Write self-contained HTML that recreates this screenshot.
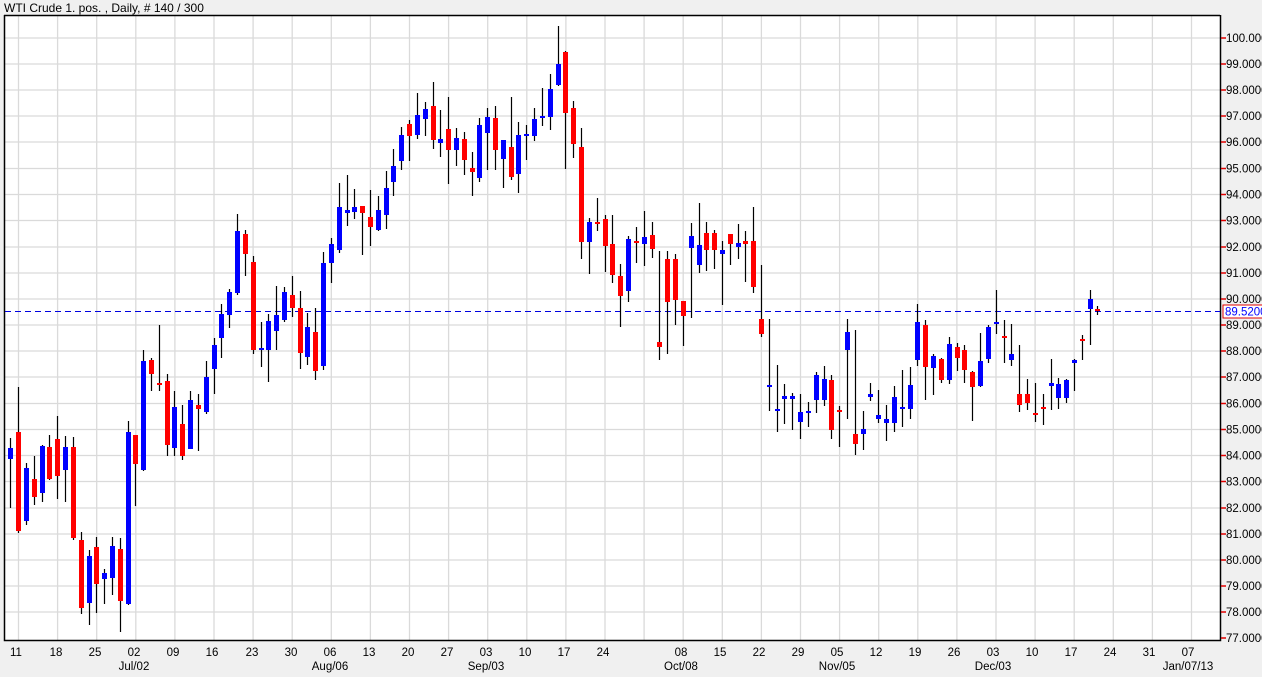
<!DOCTYPE html>
<html><head><meta charset="utf-8"><style>
html,body{margin:0;padding:0;background:#f0f0f0;}
svg{display:block;font-family:"Liberation Sans",sans-serif;}
</style></head><body>
<svg width="1262" height="677" viewBox="0 0 1262 677" xmlns="http://www.w3.org/2000/svg">
<rect x="0" y="0" width="1262" height="677" fill="#f0f0f0"/>
<rect x="5" y="15" width="1215" height="625" fill="#fff"/>
<text x="4" y="12" font-size="12" fill="#000">WTI Crude 1. pos. , Daily, # 140 / 300</text>
<g stroke="#dadada" stroke-width="1.3" fill="none">
<path d="M5 38H1220M5 64H1220M5 90H1220M5 116H1220M5 142H1220M5 168.5H1220M5 194.5H1220M5 220.5H1220M5 247H1220M5 273H1220M5 299H1220M5 325H1220M5 351H1220M5 377H1220M5 403.5H1220M5 429.5H1220M5 455.5H1220M5 481.5H1220M5 508H1220M5 534H1220M5 560H1220M5 586H1220M5 612H1220"/>
<path d="M18.5 15V640M57.6 15V640M96.7 15V640M135.8 15V640M174.9 15V640M214 15V640M253.1 15V640M292.2 15V640M331.3 15V640M370.4 15V640M409.5 15V640M448.6 15V640M487.7 15V640M526.8 15V640M565.9 15V640M605 15V640M644.1 15V640M683.2 15V640M722.3 15V640M761.4 15V640M800.5 15V640M839.6 15V640M878.7 15V640M917.8 15V640M956.9 15V640M996 15V640M1035.1 15V640M1074.2 15V640M1113.3 15V640M1152.4 15V640M1191.5 15V640"/>
</g>
<path d="M4.5 15V640.5H1220.5V15M4 15.5H1220" stroke="#000" stroke-width="1.5" fill="none"/>
<path d="M5 311.5H1220" stroke="#0000e0" stroke-width="1" stroke-dasharray="6,4"/>
<path stroke="#000" stroke-width="1.2" fill="none" d="M10.5 438V508M18.5 387V533M26.5 463V525M34.5 456V505M42.5 445V502M49.5 435V480M57.5 416V499M65.5 436V502M73.5 437V540M81.5 532V614M89.5 550V625M96.5 537V613M104.5 569V604M112.5 537V595M120.5 538V632M128.5 421V605M135.5 435V506M143.5 350V471M151.5 358V391M159.5 325V391M167.5 374V456M174.5 391V456M182.5 405V460M190.5 391V449M198.5 394V451M206.5 361V414M214.5 338V394M221.5 304V358M229.5 289V328M237.5 214V295M245.5 230V276M253.5 256V354M261.5 322V367M268.5 314V382M276.5 286V350M284.5 287V322M292.5 276V317M300.5 291V369M307.5 313V365M315.5 308V380M323.5 252V370M331.5 238V283M339.5 183V253M347.5 175V226M354.5 189V219M362.5 206V255M370.5 190V246M378.5 196V231M386.5 171V229M393.5 149V196M401.5 127V170M409.5 120V161M417.5 93V139M425.5 102V136M433.5 82V149M440.5 110V157M448.5 97V184M456.5 128V166M464.5 132V175M472.5 152V196M479.5 118V182M487.5 108V170M495.5 106V170M503.5 140V188M511.5 97V180M518.5 122V193M526.5 125V160M534.5 108V141M542.5 88V126M550.5 74V130M558.5 26V86M565.5 51V169M573.5 101V158M581.5 128V259M589.5 218V274M597.5 198V231M605.5 215V272M612.5 215V283M620.5 264V327M628.5 236V302M636.5 227V263M644.5 211V266M652.5 222V258M659.5 251V360M667.5 251V354M675.5 254V325M683.5 301V346M691.5 223V318M699.5 203V273M706.5 222V271M714.5 230V269M722.5 241V305M730.5 234V265M738.5 224V259M745.5 231V282M753.5 207V293M761.5 265V337M769.5 319V411M777.5 365V432M784.5 384V424M792.5 393V430M800.5 394V439M808.5 402V427M816.5 372V413M824.5 366V406M831.5 375V439M839.5 406V447M847.5 319V419M855.5 330V455M863.5 411V450M870.5 383V401M878.5 390V423M886.5 405V441M894.5 386V432M902.5 370V427M910.5 367V419M917.5 304V366M925.5 320V400M933.5 354V395M941.5 358V383M949.5 337V384M957.5 343V371M964.5 345V383M972.5 371V421M980.5 333V387M988.5 325V363M996.5 290V334M1004.5 320V363M1011.5 324V366M1019.5 345V412M1027.5 379V410M1035.5 383V422M1043.5 394V425M1051.5 359V410M1058.5 378V409M1066.5 379V403M1074.5 359V391M1082.5 335V360M1090.5 290V345M1097.5 306V315"/>
<path fill="#0000ff" d="M8 448h5v11h-5zM24 468h5v53h-5zM40 446h5v47h-5zM63 447h5v23h-5zM87 556h5v47h-5zM102 573h5v6h-5zM110 546h5v32h-5zM126 432h5v172h-5zM141 361h5v109h-5zM172 407h5v41h-5zM188 400h5v49h-5zM204 377h5v35h-5zM212 345h5v24h-5zM219 314h5v24h-5zM227 292h5v23h-5zM235 231h5v62h-5zM259 348h5v2h-5zM266 321h5v29h-5zM274 315h5v16h-5zM282 292h5v28h-5zM305 327h5v30h-5zM321 263h5v103h-5zM329 244h5v19h-5zM337 207h5v43h-5zM345 210h5v3h-5zM352 207h5v5h-5zM376 210h5v20h-5zM384 188h5v27h-5zM391 166h5v16h-5zM399 135h5v26h-5zM415 115h5v20h-5zM423 109h5v10h-5zM438 139h5v4h-5zM454 138h5v12h-5zM477 125h5v53h-5zM485 117h5v16h-5zM501 140h5v19h-5zM516 135h5v39h-5zM524 134h5v2h-5zM532 119h5v17h-5zM540 116h5v2h-5zM548 89h5v28h-5zM556 64h5v21h-5zM587 222h5v20h-5zM626 239h5v52h-5zM642 237h5v7h-5zM689 236h5v12h-5zM697 245h5v20h-5zM720 250h5v4h-5zM736 243h5v4h-5zM767 385h5v2h-5zM775 409h5v2h-5zM782 396h5v3h-5zM790 396h5v3h-5zM798 412h5v10h-5zM806 411h5v2h-5zM814 375h5v25h-5zM822 379h5v21h-5zM845 332h5v18h-5zM861 429h5v5h-5zM868 394h5v3h-5zM876 415h5v4h-5zM884 419h5v4h-5zM892 397h5v26h-5zM900 407h5v2h-5zM908 385h5v24h-5zM915 322h5v38h-5zM931 356h5v12h-5zM947 344h5v36h-5zM978 361h5v25h-5zM986 327h5v32h-5zM994 322h5v2h-5zM1009 354h5v6h-5zM1049 383h5v3h-5zM1056 384h5v14h-5zM1064 380h5v18h-5zM1072 360h5v3h-5zM1088 299h5v10h-5z"/>
<path fill="#ff0000" d="M16 432h5v99h-5zM32 479h5v18h-5zM47 447h5v32h-5zM55 439h5v37h-5zM71 447h5v91h-5zM79 540h5v68h-5zM94 547h5v37h-5zM118 549h5v52h-5zM133 435h5v29h-5zM149 360h5v14h-5zM157 383h5v2h-5zM165 381h5v64h-5zM180 424h5v32h-5zM196 405h5v4h-5zM243 234h5v20h-5zM251 262h5v88h-5zM290 295h5v13h-5zM298 308h5v45h-5zM313 332h5v39h-5zM360 206h5v7h-5zM368 217h5v10h-5zM407 124h5v12h-5zM431 106h5v34h-5zM446 129h5v21h-5zM462 139h5v21h-5zM470 168h5v4h-5zM493 118h5v32h-5zM509 147h5v30h-5zM563 52h5v61h-5zM571 108h5v36h-5zM579 147h5v95h-5zM595 222h5v2h-5zM603 219h5v27h-5zM610 244h5v31h-5zM618 276h5v20h-5zM634 241h5v2h-5zM650 235h5v14h-5zM657 342h5v5h-5zM665 259h5v43h-5zM673 259h5v41h-5zM681 301h5v15h-5zM704 233h5v17h-5zM712 233h5v17h-5zM728 234h5v10h-5zM743 241h5v3h-5zM751 241h5v46h-5zM759 319h5v15h-5zM829 380h5v50h-5zM837 410h5v2h-5zM853 434h5v10h-5zM923 325h5v42h-5zM939 359h5v21h-5zM955 347h5v11h-5zM962 350h5v20h-5zM970 372h5v15h-5zM1002 336h5v2h-5zM1017 394h5v11h-5zM1025 394h5v9h-5zM1033 413h5v2h-5zM1041 407h5v2h-5zM1080 339h5v2h-5zM1095 309h5v2h-5z"/>
<path stroke="#e00000" stroke-width="1.5" d="M1221 38H1226M1221 64H1226M1221 90H1226M1221 116H1226M1221 142H1226M1221 168.5H1226M1221 194.5H1226M1221 220.5H1226M1221 247H1226M1221 273H1226M1221 299H1226M1221 325H1226M1221 351H1226M1221 377H1226M1221 403.5H1226M1221 429.5H1226M1221 455.5H1226M1221 481.5H1226M1221 508H1226M1221 534H1226M1221 560H1226M1221 586H1226M1221 612H1226M1221 638H1226"/>
<g font-size="11.5" fill="#000">
<text x="1226" y="42">100.0000</text><text x="1226" y="68">99.0000</text><text x="1226" y="94">98.0000</text><text x="1226" y="120">97.0000</text><text x="1226" y="146">96.0000</text><text x="1226" y="172.5">95.0000</text><text x="1226" y="198.5">94.0000</text><text x="1226" y="224.5">93.0000</text><text x="1226" y="251">92.0000</text><text x="1226" y="277">91.0000</text><text x="1226" y="303">90.0000</text><text x="1226" y="329">89.0000</text><text x="1226" y="355">88.0000</text><text x="1226" y="381">87.0000</text><text x="1226" y="407.5">86.0000</text><text x="1226" y="433.5">85.0000</text><text x="1226" y="459.5">84.0000</text><text x="1226" y="485.5">83.0000</text><text x="1226" y="512">82.0000</text><text x="1226" y="538">81.0000</text><text x="1226" y="564">80.0000</text><text x="1226" y="590">79.0000</text><text x="1226" y="616">78.0000</text><text x="1226" y="642">77.0000</text>
</g>
<rect x="1223" y="305" width="42" height="13" fill="#fff" stroke="#e00000" stroke-width="1"/>
<text x="1225" y="315.5" font-size="11.5" fill="#0000ff">89.5200</text>
<g font-size="11.5" fill="#000" text-anchor="middle">
<text x="16" y="656">11</text><text x="56" y="656">18</text><text x="95" y="656">25</text><text x="134" y="656">02</text><text x="173" y="656">09</text><text x="212" y="656">16</text><text x="252" y="656">23</text><text x="291" y="656">30</text><text x="330" y="656">06</text><text x="369" y="656">13</text><text x="408" y="656">20</text><text x="447" y="656">27</text><text x="486" y="656">03</text><text x="525" y="656">10</text><text x="564" y="656">17</text><text x="603" y="656">24</text><text x="681" y="656">08</text><text x="720" y="656">15</text><text x="759" y="656">22</text><text x="798" y="656">29</text><text x="837" y="656">05</text><text x="876" y="656">12</text><text x="915" y="656">19</text><text x="954" y="656">26</text><text x="993" y="656">03</text><text x="1032" y="656">10</text><text x="1071" y="656">17</text><text x="1110" y="656">24</text><text x="1149" y="656">31</text><text x="1188" y="656">07</text>
<text x="134" y="670">Jul/02</text><text x="330" y="670">Aug/06</text><text x="486" y="670">Sep/03</text><text x="681" y="670">Oct/08</text><text x="837" y="670">Nov/05</text><text x="993" y="670">Dec/03</text><text x="1188" y="670">Jan/07/13</text>
</g>
</svg>
</body></html>
